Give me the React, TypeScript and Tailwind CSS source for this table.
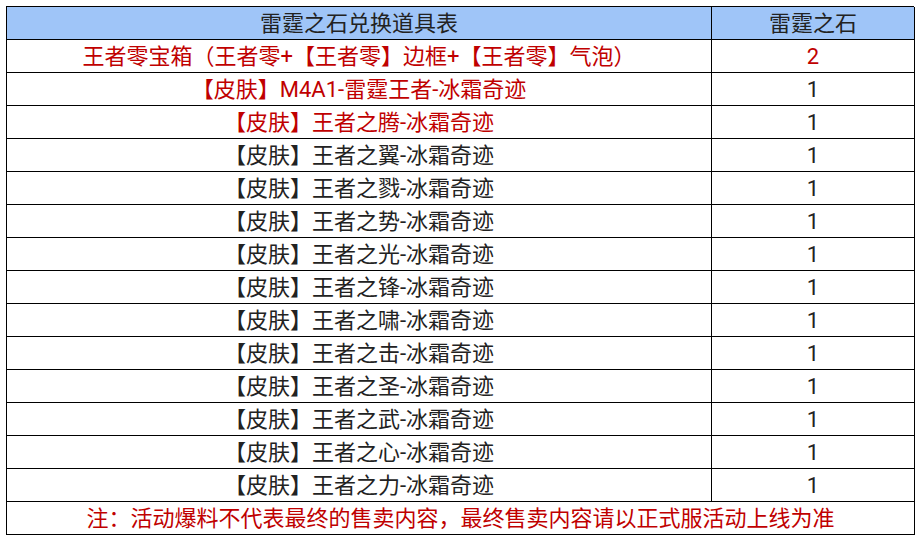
const rows: { name: string; value: string; red?: boolean; valueRed?: boolean }[] = [
  { name: "王者零宝箱（王者零+【王者零】边框+【王者零】气泡）", value: "2", red: true, valueRed: true },
  { name: "【皮肤】M4A1-雷霆王者-冰霜奇迹", value: "1", red: true },
  { name: "【皮肤】王者之腾-冰霜奇迹", value: "1", red: true },
  { name: "【皮肤】王者之翼-冰霜奇迹", value: "1" },
  { name: "【皮肤】王者之戮-冰霜奇迹", value: "1" },
  { name: "【皮肤】王者之势-冰霜奇迹", value: "1" },
  { name: "【皮肤】王者之光-冰霜奇迹", value: "1" },
  { name: "【皮肤】王者之锋-冰霜奇迹", value: "1" },
  { name: "【皮肤】王者之啸-冰霜奇迹", value: "1" },
  { name: "【皮肤】王者之击-冰霜奇迹", value: "1" },
  { name: "【皮肤】王者之圣-冰霜奇迹", value: "1" },
  { name: "【皮肤】王者之武-冰霜奇迹", value: "1" },
  { name: "【皮肤】王者之心-冰霜奇迹", value: "1" },
  { name: "【皮肤】王者之力-冰霜奇迹", value: "1" },
]

const cell = "flex h-[33px] items-center justify-center border-r border-b border-black pt-[2px]"

export default function App() {
  return (
    <div className="h-[538px] w-[918px] bg-white pt-[6px] pl-[6px] font-['Roboto','Noto_Sans_CJK_SC',sans-serif] text-[22px] leading-none text-[#222]">
      <div className="grid w-[908px] grid-cols-[705px_203px] border-t border-l border-black">
        <div className={`${cell} bg-[#9fc5f8]`}>雷霆之石兑换道具表</div>
        <div className={`${cell} bg-[#9fc5f8]`}>雷霆之石</div>
        {rows.map((r) => (
          <div key={r.name} className="contents">
            <div className={`${cell} ${r.red ? "text-[#c00000]" : ""}`}>{r.name}</div>
            <div className={`${cell} ${r.valueRed ? "text-[#c00000]" : ""}`}>{r.value}</div>
          </div>
        ))}
        <div className={`${cell} col-span-2 text-[#c00000]`}>
          注：活动爆料不代表最终的售卖内容，最终售卖内容请以正式服活动上线为准
        </div>
      </div>
    </div>
  )
}
